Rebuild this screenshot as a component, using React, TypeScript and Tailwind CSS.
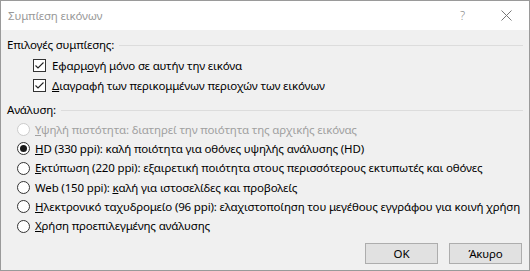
import React from "react";

const font = { fontFamily: '"Noto Sans", "Open Sans", sans-serif', letterSpacing: "-0.16px" };

function Check() {
  return (
    <div className="w-[13px] h-[13px] border border-[#333333] bg-white flex items-center justify-center shrink-0">
      <svg width="11" height="11" viewBox="0 0 11 11">
        <path d="M1.5 5.5 L4 8 L9.5 2.5" fill="none" stroke="#222" strokeWidth="1.1" />
      </svg>
    </div>
  );
}

function Radio({ checked, disabled }: { checked?: boolean; disabled?: boolean }) {
  return (
    <div
      className={`w-[13px] h-[13px] rounded-full border bg-white flex items-center justify-center shrink-0 ${
        disabled ? "border-[#cccccc]" : "border-[#333333]"
      }`}
    >
      {checked && <div className="w-[7px] h-[7px] rounded-full bg-[#1a1a1a]" />}
    </div>
  );
}

function GroupHeader({ label }: { label: string }) {
  return (
    <div className="flex items-center h-[14px] gap-[5px]">
      <span className="text-[11.5px] text-black whitespace-nowrap leading-none">{label}</span>
      <div className="flex-1 h-px bg-[#dcdcdc]" />
    </div>
  );
}

function RadioRow({
  children,
  checked,
  disabled,
}: {
  children: React.ReactNode;
  checked?: boolean;
  disabled?: boolean;
}) {
  return (
    <div className="flex items-center h-[19.3px] pl-[10px] gap-[5px]">
      <Radio checked={checked} disabled={disabled} />
      <span className={`text-[11.5px] whitespace-nowrap leading-none ${disabled ? "text-[#a0a0a0]" : "text-black"}`}>
        {children}
      </span>
    </div>
  );
}

export default function App() {
  return (
    <div
      className="w-[530px] h-[271px] border border-[#9a9a9a] flex flex-col bg-[#f0f0f0] overflow-hidden"
      style={font}
    >
      <div className="h-[29px] bg-white flex items-center pl-[7px] pr-[17px] shrink-0">
        <span className="text-[11.5px] text-[#999999] flex-1 leading-none">Συμπίεση εικόνων</span>
        <span className="text-[12px] text-[#888888] mr-[36px] leading-none" style={{ fontWeight: 300 }}>?</span>
        <svg width="11" height="11" viewBox="0 0 11 11">
          <path d="M0.5 0.5 L10.5 10.5 M10.5 0.5 L0.5 10.5" stroke="#777" strokeWidth="1" />
        </svg>
      </div>
      <div className="flex-1 flex flex-col pl-[6px] pr-[6px] pt-[8px]">
        <GroupHeader label="Επιλογές συμπίεσης:" />
        <div className="flex flex-col pl-[26px] mt-[3px]">
          <div className="flex items-center h-[20.5px] gap-[6px]">
            <Check />
            <span className="text-[11.5px] text-black whitespace-nowrap leading-none">
              Εφαρμ<u>ο</u>γή μόνο σε αυτήν την εικόνα
            </span>
          </div>
          <div className="flex items-center h-[20.5px] gap-[6px]">
            <Check />
            <span className="text-[11.5px] text-black whitespace-nowrap leading-none">
              <u>Δ</u>ιαγραφή των περικομμένων περιοχών των εικόνων
            </span>
          </div>
        </div>
        <div className="mt-[7px]">
          <GroupHeader label="Ανάλυση:" />
        </div>
        <div className="flex flex-col mt-[3px]">
          <RadioRow disabled>
            <u>Υ</u>ψηλή πιστότητα: διατηρεί την ποιότητα της αρχικής εικόνας
          </RadioRow>
          <RadioRow checked>
            <u>H</u>D (330 ppi): καλή ποιότητα για οθόνες υψηλής ανάλυσης (HD)
          </RadioRow>
          <RadioRow>
            <u>Ε</u>κτύπωση (220 ppi): εξαιρετική ποιότητα στους περισσότερους εκτυπωτές και οθόνες
          </RadioRow>
          <RadioRow>
            Web (150 ppi): <u>κ</u>αλή για ιστοσελίδες και προβολείς
          </RadioRow>
          <RadioRow>
            <u>Η</u>λεκτρονικό ταχυδρομείο (96 ppi): ελαχιστοποίηση του μεγέθους εγγράφου για κοινή χρήση
          </RadioRow>
          <RadioRow>
            <u>Χ</u>ρήση προεπιλεγμένης ανάλυσης
          </RadioRow>
        </div>
        <div className="flex justify-end gap-[11px] mt-[7px] pr-[1px]">
          <button className="w-[73px] h-[21px] bg-[#e1e1e1] border border-[#adadad] text-[11.5px] text-black leading-none">
            OK
          </button>
          <button className="w-[73px] h-[21px] bg-[#e1e1e1] border border-[#adadad] text-[11.5px] text-black leading-none">
            Άκυρο
          </button>
        </div>
      </div>
    </div>
  );
}
